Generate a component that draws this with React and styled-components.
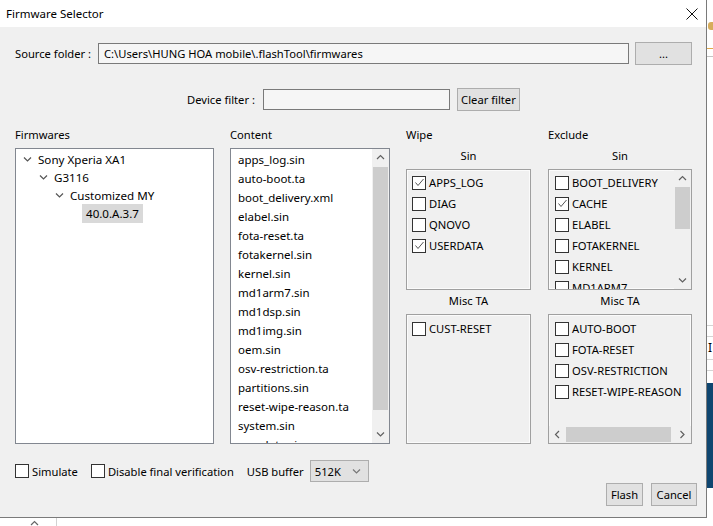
import React from 'react';
import styled, { createGlobalStyle } from 'styled-components';

const GlobalStyle = createGlobalStyle`
	html, body {
		margin: 0;
		padding: 0;
		background: #fff;
	}
	body {
		font-family: 'Noto Sans', sans-serif;
		font-size: 11.2px;
		color: #000;
	}
`;

const tree = [
	{ label: 'Sony Xperia XA1', level: 0, open: true },
	{ label: 'G3116', level: 1, open: true },
	{ label: 'Customized MY', level: 2, open: true },
	{ label: '40.0.A.3.7', level: 3, selected: true },
];

const content = [
	'apps_log.sin',
	'auto-boot.ta',
	'boot_delivery.xml',
	'elabel.sin',
	'fota-reset.ta',
	'fotakernel.sin',
	'kernel.sin',
	'md1arm7.sin',
	'md1dsp.sin',
	'md1img.sin',
	'oem.sin',
	'osv-restriction.ta',
	'partitions.sin',
	'reset-wipe-reason.ta',
	'system.sin',
	'userdata.sin',
];

const wipeSin = [
	{ name: 'APPS_LOG', checked: true },
	{ name: 'DIAG' },
	{ name: 'QNOVO' },
	{ name: 'USERDATA', checked: true },
];

const excludeSin = [
	{ name: 'BOOT_DELIVERY' },
	{ name: 'CACHE', checked: true },
	{ name: 'ELABEL' },
	{ name: 'FOTAKERNEL' },
	{ name: 'KERNEL' },
	{ name: 'MD1ARM7' },
];

const excludeMisc = ['AUTO-BOOT', 'FOTA-RESET', 'OSV-RESTRICTION', 'RESET-WIPE-REASON'];

function Chevron({ dir = 'down', color = '#606060' }) {
	const paths = {
		down: 'M1 1.5 L4.5 5 L8 1.5',
		up: 'M1 5 L4.5 1.5 L8 5',
		left: 'M5 1 L1.5 4.5 L5 8',
		right: 'M1.5 1 L5 4.5 L1.5 8',
	};
	const horiz = dir === 'left' || dir === 'right';
	return (
		<svg width={horiz ? 7 : 9} height={horiz ? 9 : 7} viewBox={horiz ? '0 0 7 9' : '0 0 9 7'}>
			<path d={paths[dir]} fill='none' stroke={color} strokeWidth='1.2' />
		</svg>
	);
}

function Check({ checked }) {
	return (
		<Box>
			{checked && (
				<svg width='11' height='11' viewBox='0 0 11 11'>
					<path d='M1.5 5.5 L4 8.5 L9.5 2' fill='none' stroke='#555' strokeWidth='1' />
				</svg>
			)}
		</Box>
	);
}

function VScroll({ offset, size }) {
	return (
		<VBar>
			<ArrowCell $h>
				<Chevron dir='up' />
			</ArrowCell>
			<VTrack>
				<VThumb style={{ marginTop: offset, height: size }} />
			</VTrack>
			<ArrowCell $h>
				<Chevron dir='down' />
			</ArrowCell>
		</VBar>
	);
}

function App() {
	return (
		<Page>
			<GlobalStyle />
			<Backdrop>
				<BackMain />
				<RightStrip>
					<Blob />
					<StripLine $top={18} $color='#e2a94a' />
					<StripLine $top={7} $color='#c4c4c4' />
					<StripLine $top={268} $color='#d4d4d4' />
					<StripLine $top={10} $color='#d4d4d4' />
					<StripGlyph>I</StripGlyph>
					<StripLine $top={2} $color='#d4d4d4' />
					<StripLine $top={10} $color='#d4d4d4' />
					<BlueBlock />
				</RightStrip>
				<BottomStrip>
					<BottomCell>
						<Chevron dir='up' color='#666' />
					</BottomCell>
				</BottomStrip>
			</Backdrop>

			<Dialog>
				<TitleBar>
					<span>Firmware Selector</span>
					<Close>
						<svg width='12' height='12' viewBox='0 0 12 12'>
							<path d='M0.5 0.5 L11.5 11.5 M11.5 0.5 L0.5 11.5' stroke='#111' strokeWidth='1' />
						</svg>
					</Close>
				</TitleBar>

				<Body>
					<SourceRow>
						<span>Source folder :</span>
						<Field $grow>C:\Users\HUNG HOA mobile\.flashTool\firmwares</Field>
						<Button $w={57} $ml={6}>...</Button>
					</SourceRow>

					<FilterRow>
						<span>Device filter :</span>
						<Field $w={187} $ml={8} />
						<Button $w={63} $ml={7}>Clear filter</Button>
					</FilterRow>

					<Columns>
						<Column $w={199}>
							<Header>Firmwares</Header>
							<WhiteBox>
								<TreeList>
									{tree.map((n) => (
										<TreeRow key={n.label} $level={n.level}>
											<Twisty>{n.open && <Chevron dir='down' color='#555' />}</Twisty>
											<TreeLabel $selected={n.selected}>{n.label}</TreeLabel>
										</TreeRow>
									))}
								</TreeList>
							</WhiteBox>
						</Column>

						<Column $w={160}>
							<Header>Content</Header>
							<WhiteBox>
								<FileList>
									{content.map((f) => (
										<FileRow key={f}>{f}</FileRow>
									))}
								</FileList>
								<VScroll offset={1} size={243} />
							</WhiteBox>
						</Column>

						<Column $w={125}>
							<Header>Wipe</Header>
							<SubLabel>Sin</SubLabel>
							<Panel $h={121}>
								<CheckList $pl={5} $pt={2}>
									{wipeSin.map((i) => (
										<CheckRow key={i.name}>
											<Check checked={i.checked} />
											{i.name}
										</CheckRow>
									))}
								</CheckList>
							</Panel>
							<SubLabel $mt={3}>Misc TA</SubLabel>
							<Panel $grow>
								<CheckList $pl={5} $pt={3}>
									<CheckRow>
										<Check />
										CUST-RESET
									</CheckRow>
								</CheckList>
							</Panel>
						</Column>

						<Column $w={144}>
							<Header>Exclude</Header>
							<SubLabel>Sin</SubLabel>
							<Panel $h={121} $row>
								<CheckList $pl={6} $pt={2}>
									{excludeSin.map((i) => (
										<CheckRow key={i.name}>
											<Check checked={i.checked} />
											{i.name}
										</CheckRow>
									))}
								</CheckList>
								<VScroll offset={0} size={42} />
							</Panel>
							<SubLabel $mt={3}>Misc TA</SubLabel>
							<Panel $grow>
								<CheckList $pl={6} $pt={3}>
									{excludeMisc.map((m) => (
										<CheckRow key={m}>
											<Check />
											{m}
										</CheckRow>
									))}
								</CheckList>
								<HBar>
									<ArrowCell $w>
										<Chevron dir='left' />
									</ArrowCell>
									<HTrack>
										<HThumb style={{ width: 105 }} />
									</HTrack>
									<ArrowCell $w>
										<Chevron dir='right' />
									</ArrowCell>
								</HBar>
							</Panel>
						</Column>
					</Columns>

					<OptionsRow>
						<Option>
							<Check />
							Simulate
						</Option>
						<Option>
							<Check />
							Disable final verification
						</Option>
						<span>USB buffer</span>
						<Select>
							<span>512K</span>
							<Chevron dir='down' color='#777' />
						</Select>
					</OptionsRow>

					<ButtonsRow>
						<Button $w={37} $h={23}>Flash</Button>
						<Button $w={46} $h={23}>Cancel</Button>
					</ButtonsRow>
				</Body>
			</Dialog>
		</Page>
	);
}

const Page = styled.div`
	position: relative;
	width: 713px;
	height: 526px;
	overflow: hidden;
	background: #fff;
`;

const Backdrop = styled.div`
	display: grid;
	grid-template-columns: 707px 6px;
	grid-template-rows: 518px 8px;
	width: 713px;
	height: 526px;
`;

const BackMain = styled.div`
	background: #fff;
`;

const RightStrip = styled.div`
	display: flex;
	flex-direction: column;
	background: #fff;
`;

const Blob = styled.div`
	margin-top: 22px;
	margin-left: 1px;
	width: 5px;
	height: 8px;
	border-radius: 3px 0 0 3px;
	background: #d7ad5c;
`;

const StripLine = styled.div`
	margin-top: ${(p) => p.$top}px;
	height: 1px;
	background: ${(p) => p.$color};
`;

const StripGlyph = styled.div`
	margin-top: 2px;
	height: 18px;
	line-height: 18px;
	font-size: 12px;
	padding-left: 1px;
`;

const BlueBlock = styled.div`
	margin-top: 12px;
	height: 105px;
	background: #0f4670;
`;

const BottomStrip = styled.div`
	grid-column: 1 / 3;
	display: flex;
	background: #fff;
`;

const BottomCell = styled.div`
	width: 57px;
	border-right: 1px solid #d2d2d2;
	display: flex;
	justify-content: center;
	align-items: flex-start;
	padding-top: 2px;
	padding-left: 12px;
	box-sizing: border-box;
`;

const Dialog = styled.div`
	position: absolute;
	top: 0;
	left: 0;
	width: 707px;
	height: 518px;
	box-sizing: border-box;
	border-right: 1px solid #7a7a7a;
	border-bottom: 1px solid #7a7a7a;
	background: #f0f0f0;
	display: flex;
	flex-direction: column;
`;

const TitleBar = styled.div`
	height: 27px;
	flex-shrink: 0;
	background: #fff;
	display: flex;
	align-items: center;
	justify-content: space-between;
	padding-left: 6px;
	font-size: 11.5px;
`;

const Close = styled.div`
	display: flex;
	margin-right: 8px;
	margin-top: 1px;
`;

const Body = styled.div`
	display: flex;
	flex-direction: column;
	padding: 0 14px 0 15px;
`;

const SourceRow = styled.div`
	margin-top: 15px;
	height: 23px;
	display: flex;
	align-items: center;
`;

const FilterRow = styled.div`
	margin-top: 23px;
	height: 23px;
	display: flex;
	align-items: center;
	justify-content: center;
`;

const Field = styled.div`
	box-sizing: border-box;
	height: 21px;
	${(p) => (p.$grow ? 'flex: 1;' : `width: ${p.$w}px;`)}
	margin-left: ${(p) => p.$ml || 7}px;
	border: 1px solid #7a7a7a;
	background: #f6f6f6;
	padding-left: 5px;
	line-height: 19px;
	white-space: nowrap;
	overflow: hidden;
`;

const Button = styled.div`
	box-sizing: border-box;
	width: ${(p) => p.$w}px;
	height: ${(p) => p.$h || 23}px;
	margin-left: ${(p) => p.$ml || 0}px;
	border: 1px solid #adadad;
	background: #e1e1e1;
	display: flex;
	align-items: center;
	justify-content: center;
	white-space: nowrap;
`;

const Columns = styled.div`
	margin-top: 15px;
	height: 318px;
	display: flex;
	gap: 16px;

	& > *:last-child {
		margin-left: 1px;
	}
`;

const Column = styled.div`
	width: ${(p) => p.$w}px;
	display: flex;
	flex-direction: column;
`;

const Header = styled.div`
	height: 22px;
	line-height: 18px;
`;

const SubLabel = styled.div`
	margin-top: ${(p) => p.$mt || 0}px;
	margin-bottom: 5px;
	height: 16px;
	line-height: 16px;
	text-align: center;
`;

const WhiteBox = styled.div`
	flex: 1;
	box-sizing: border-box;
	border: 1px solid #828790;
	background: #fff;
	display: flex;
	overflow: hidden;
`;

const Panel = styled.div`
	box-sizing: border-box;
	${(p) => (p.$grow ? 'flex: 1;' : `height: ${p.$h}px;`)}
	border: 1px solid #a0a0a0;
	box-shadow: inset 0 0 0 1px #fbfbfb;
	background: #f0f0f0;
	display: flex;
	flex-direction: ${(p) => (p.$row ? 'row' : 'column')};
	overflow: hidden;
`;

const TreeList = styled.div`
	padding-top: 1px;
	display: flex;
	flex-direction: column;
	font-size: 11.6px;
`;

const TreeRow = styled.div`
	height: 18px;
	display: flex;
	align-items: center;
	padding-left: ${(p) => 4 + p.$level * 16}px;
`;

const Twisty = styled.div`
	width: 14px;
	display: flex;
	justify-content: center;
	padding-top: 1px;
`;

const TreeLabel = styled.div`
	padding: 0 4px;
	line-height: 19px;
	background: ${(p) => (p.$selected ? '#d9d9d9' : 'transparent')};
`;

const FileList = styled.div`
	flex: 1;
	padding: 1px 0 0 7px;
	display: flex;
	flex-direction: column;
	font-size: 11.5px;
`;

const FileRow = styled.div`
	height: 19px;
	line-height: 19px;
	flex-shrink: 0;
	white-space: nowrap;
`;

const VBar = styled.div`
	width: 17px;
	flex-shrink: 0;
	background: #f0f0f0;
	display: flex;
	flex-direction: column;
`;

const ArrowCell = styled.div`
	${(p) => (p.$h ? 'height: 17px;' : '')}
	${(p) => (p.$w ? 'width: 17px;' : '')}
	flex-shrink: 0;
	display: flex;
	align-items: center;
	justify-content: center;
`;

const VTrack = styled.div`
	flex: 1;
	display: flex;
	flex-direction: column;
	align-items: center;
`;

const VThumb = styled.div`
	width: 15px;
	background: #cdcdcd;
`;

const HBar = styled.div`
	height: 17px;
	flex-shrink: 0;
	display: flex;
	background: #f0f0f0;
`;

const HTrack = styled.div`
	flex: 1;
	display: flex;
	align-items: center;
`;

const HThumb = styled.div`
	height: 15px;
	background: #cdcdcd;
`;

const CheckList = styled.div`
	flex: 1;
	padding: ${(p) => p.$pt}px 0 0 ${(p) => p.$pl}px;
	display: flex;
	flex-direction: column;
`;

const CheckRow = styled.div`
	height: 21px;
	flex-shrink: 0;
	display: flex;
	align-items: center;
	gap: 3px;
	white-space: nowrap;
`;

const Box = styled.div`
	box-sizing: border-box;
	width: 14px;
	height: 14px;
	border: 1px solid #333;
	background: #fff;
	display: flex;
	align-items: center;
	justify-content: center;
	flex-shrink: 0;
`;

const OptionsRow = styled.div`
	margin-top: 16px;
	height: 22px;
	display: flex;
	align-items: center;
	gap: 13px;
`;

const Option = styled.div`
	display: flex;
	align-items: center;
	gap: 3px;
`;

const Select = styled.div`
	box-sizing: border-box;
	width: 59px;
	height: 22px;
	margin-left: -7px;
	border: 1px solid #adadad;
	background: #e1e1e1;
	display: flex;
	align-items: center;
	justify-content: space-between;
	padding: 0 7px 0 4px;
`;

const ButtonsRow = styled.div`
	margin-top: 1px;
	margin-right: -5px;
	display: flex;
	justify-content: flex-end;
	gap: 8px;
`;

export default App;
